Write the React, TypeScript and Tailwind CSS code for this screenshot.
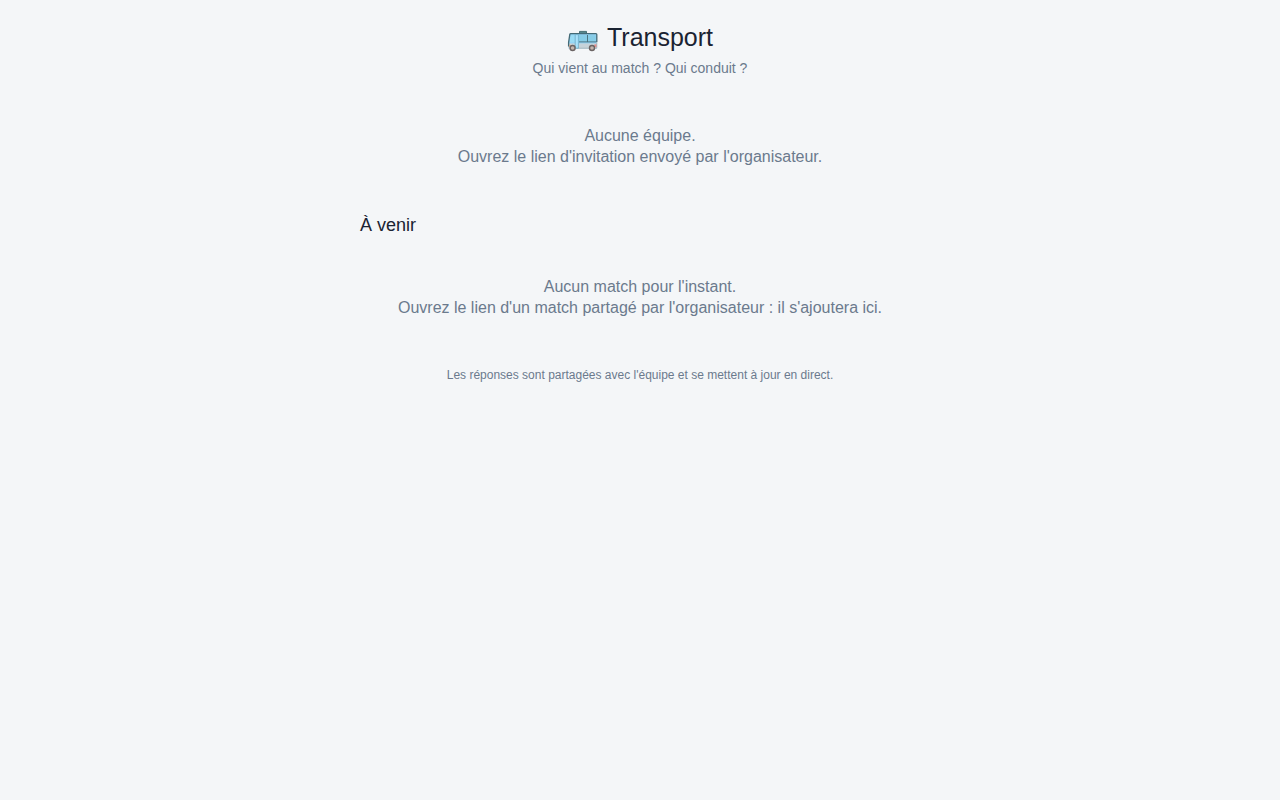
import React from 'react';

const BusIcon = () => {
  return (
    <svg viewBox="0 0 32 32" className="w-8 h-8" aria-hidden="true">
      <path d="M12.5 12.2v-1.8h7v1.8z" fill="#5c9298" stroke="#476f75" strokeWidth="1" />
      <path d="M3.8 12.6h25.1c.5 0 .9.4.9.9v14H1.6v-6.2l1.2-7.9c.1-.5.5-.8 1-.8z" fill="#92d3f5" />
      <path d="M1.6 22.4h28.2v5.1H1.6z" fill="#c6d2d9" />
      <path d="M1.6 23.6H4V26H1.6z" fill="#f0c3a5" />
      <path d="M27.4 23.4h2.4v2.8h-2.4z" fill="#ea8b88" />
      <path d="M3.6 14.2h4.2v7H2.6z" fill="#9adcf5" />
      <path d="M12 14.2h8v6.4h-8zM21 14.2h7.6v6.4H21z" fill="#86cce6" />
      <path d="M12 20.9h17.4M20.5 14v7" stroke="#4b7480" strokeWidth="1" />
      <path d="M3.8 12.6h25.1c.5 0 .9.4.9.9v7.6M1.6 25.5v-4.2l1.2-7.9c.1-.5.5-.8 1-.8" fill="none" stroke="#446a76" strokeWidth="1.3" strokeLinejoin="round" />
      <path d="M29.8 21v6.2h-2M9.5 27.2h12.8" fill="none" stroke="#a5b2b8" strokeWidth=".8" />
      <path d="M8.2 13.6h3.2v13.6H8.2z" fill="#a9e2fb" stroke="#6dabc5" strokeWidth=".8" />
      <circle cx="5.6" cy="27" r="2.5" fill="#c4b5ae" stroke="#6b6464" strokeWidth="1.4" />
      <circle cx="25" cy="27" r="2.5" fill="#c4b5ae" stroke="#6b6464" strokeWidth="1.4" />
    </svg>
  );
};

const EmptyState = ({ title, text }: { title: string; text: string }) => {
  return (
    <div className="px-4 py-8 text-center text-base leading-[21px] text-[#6b7a8d]">
      <p>{title}</p>
      <p>{text}</p>
    </div>
  );
};

const App = () => {
  return (
    <div className="min-h-screen bg-[#f4f6f8] px-4 pt-5 pb-10 font-['Liberation_Sans',Arial,sans-serif] text-[#1a2332]">
      <div className="max-w-[560px] mx-auto">
        <header className="text-center mb-[15px]">
          <h1 className="flex items-center justify-center gap-2 text-[25px] leading-[34px]">
            <BusIcon />
            Transport
          </h1>
          <p className="mt-1 text-sm leading-5 text-[#6b7a8d]">Qui vient au match ? Qui conduit ?</p>
        </header>

        <main>
          <EmptyState title="Aucune équipe." text="Ouvrez le lien d'invitation envoyé par l'organisateur." />

          <section className="mt-3.5">
            <h2 className="text-lg leading-6">À venir</h2>
            <div className="mt-[7px]">
              <EmptyState
                title="Aucun match pour l'instant."
                text="Ouvrez le lien d'un match partagé par l'organisateur : il s'ajoutera ici."
              />
            </div>
          </section>
        </main>

        <footer className="mt-4 text-center text-xs leading-[18px] text-[#6b7a8d]">
          Les réponses sont partagées avec l'équipe et se mettent à jour en direct.
        </footer>
      </div>
    </div>
  );
};

export default App;
